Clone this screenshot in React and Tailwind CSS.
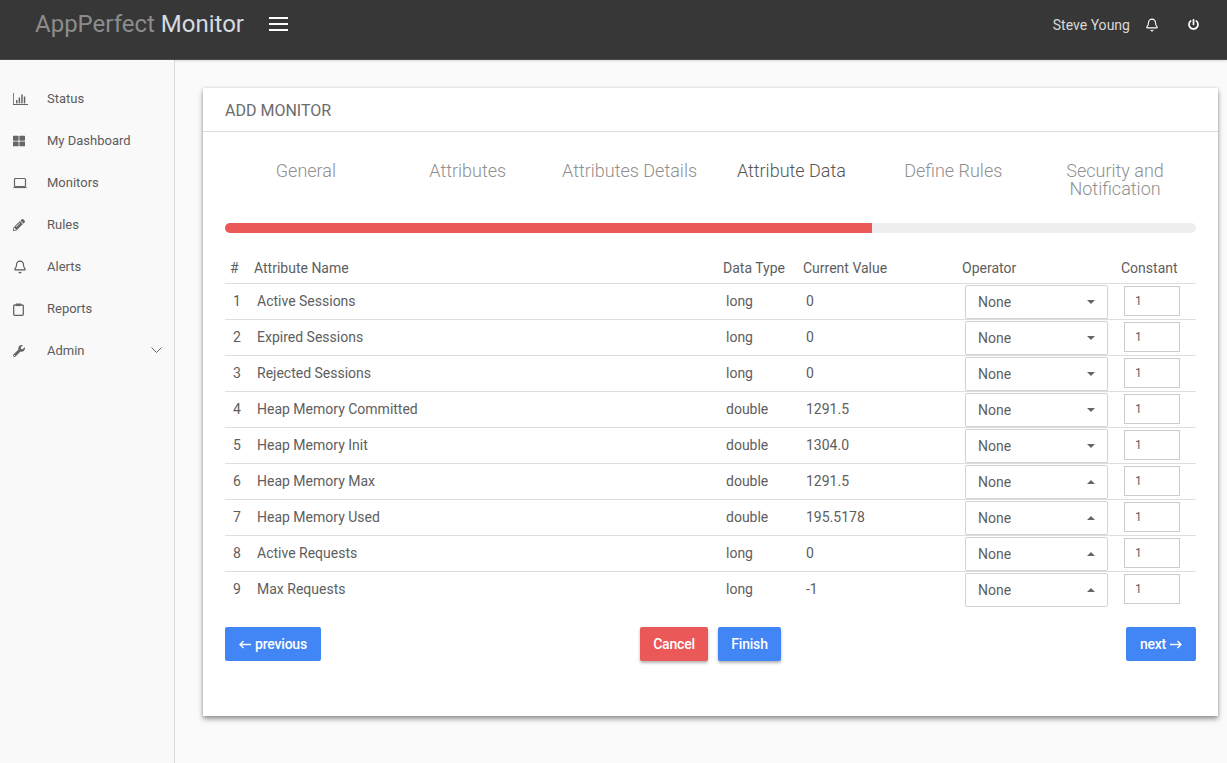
import React from "react";
import { FaThLarge, FaPencilAlt, FaWrench, FaPowerOff } from "react-icons/fa";
import { Bell } from "lucide-react";

const BarChart = () => (
  <svg width="15" height="12" viewBox="0 0 15 12" fill="#666">
    <path d="M0 0h.8v11H15v1H0z" />
    <rect x="3" y="7" width="1.5" height="3.4" />
    <rect x="5.6" y="4.5" width="1.5" height="5.9" />
    <rect x="8.2" y="1.5" width="1.5" height="8.9" />
    <rect x="10.8" y="3.5" width="1.5" height="6.9" />
  </svg>
);
const Laptop = () => (
  <svg width="14" height="12" viewBox="0 0 14 12" fill="none" stroke="#666">
    <rect x="1.5" y="1.5" width="11" height="8" rx="1" strokeWidth="1.2" />
    <path d="M0.5 10.5h13" strokeWidth="1.2" />
  </svg>
);
const Clip = () => (
  <svg width="11" height="13" viewBox="0 0 11 13" fill="none" stroke="#666">
    <rect x="0.7" y="2" width="9.6" height="10.3" rx="1" strokeWidth="1.3" />
    <rect x="3" y="0.5" width="5" height="2.6" fill="#666" stroke="none" />
  </svg>
);
const Arrow = ({ left }) => (
  <svg width="12" height="9" viewBox="0 0 12 9" fill="none" stroke="#fff" strokeWidth="1.4" className="inline-block shrink-0">
    <path d={left ? "M12 4.5H1M4.5 1L1 4.5L4.5 8" : "M0 4.5H11M7.5 1L11 4.5L7.5 8"} />
  </svg>
);

const nav = [
  ["Status", <BarChart />],
  ["My Dashboard", <FaThLarge size={12} color="#666" />],
  ["Monitors", <Laptop />],
  ["Rules", <FaPencilAlt size={12} color="#666" />],
  ["Alerts", <Bell size={14} color="#555" strokeWidth={1.9} />],
  ["Reports", <Clip />],
  ["Admin", <FaWrench size={12} color="#666" />],
];

const tabs = ["General", "Attributes", "Attributes Details", "Attribute Data", "Define Rules", "Security and Notification"];

const rows = [
  ["Active Sessions", "long", "0", false],
  ["Expired Sessions", "long", "0", false],
  ["Rejected Sessions", "long", "0", false],
  ["Heap Memory Committed", "double", "1291.5", false],
  ["Heap Memory Init", "double", "1304.0", false],
  ["Heap Memory Max", "double", "1291.5", true],
  ["Heap Memory Used", "double", "195.5178", true],
  ["Active Requests", "long", "0", true],
  ["Max Requests", "long", "-1", true],
];

const Caret = ({ up }) => (
  <svg width="8" height="4" viewBox="0 0 8 4" fill="#666">
    <path d={up ? "M0 4L4 0L8 4z" : "M0 0L8 0L4 4z"} />
  </svg>
);

export default function App() {
  return (
    <div className="w-[1227px] h-[763px] overflow-hidden flex flex-col bg-[#fafafa] font-['Roboto',sans-serif] text-[14px] text-[#5e5e5e]">
      <header className="h-[60px] shrink-0 bg-[#373737] border-b border-[#4a4a4a] flex items-center pl-[35px] pr-[28px] pb-[12px] shadow-[0_1px_2px_rgba(0,0,0,0.15)]">
        <div className="text-[24px] leading-none text-[#8c8c8c]">
          AppPerfect <span className="text-[#d6dbe0]">Monitor</span>
        </div>
        <div className="ml-[25px] w-[19px] flex flex-col gap-[4px]">
          <span className="h-[2px] bg-white" />
          <span className="h-[2px] bg-white" />
          <span className="h-[2px] bg-white" />
        </div>
        <div className="ml-auto text-[14px] text-[#d8d8d8] pt-[4px] tracking-[0.02px]">Steve Young</div>
        <Bell size={14} color="#ffffff" strokeWidth={1.9} className="ml-[15px] mt-[2px]" />
        <FaPowerOff size={11} color="#ffffff" className="ml-[29px] mt-[2px]" />
      </header>
      <div className="flex flex-1 min-h-0">
        <aside className="w-[175px] shrink-0 border-r border-[#d9d9d9] bg-[#f9f9f9] pt-[18px]">
          {nav.map(([label, icon]) => (
            <div key={label} className="h-[42px] flex items-center relative pl-[13px]">
              <span className="w-[34px] flex items-center">{icon}</span>
              <span className="text-[13px] text-[#5c5c5c]">{label}</span>
              {label === "Admin" && (
                <svg className="ml-auto mr-[12px] mb-[1px]" width="11" height="7" viewBox="0 0 11 7" fill="none" stroke="#666" strokeWidth="1">
                  <path d="M0.5 0.5L5.5 5.5L10.5 0.5" />
                </svg>
              )}
            </div>
          ))}
        </aside>
        <main className="flex-1 pt-[28px] pl-[28px] pr-[9px]">
          <section className="h-[628px] bg-white shadow-[0_3px_5px_rgba(0,0,0,0.4),0_0_3px_rgba(0,0,0,0.12)]">
            <div className="h-[44px] border-b border-[#dedede] flex items-center pl-[22px] pt-[2px] text-[16px] text-[#6b6b6b]">ADD MONITOR</div>
            <div className="px-[22px]">
              <div className="grid grid-cols-6 pt-[30px] h-[91px]">
                {tabs.map((t) => (
                  <div key={t} className={`text-center text-[18px] leading-[18px] font-light px-[10px] ${t === "Attribute Data" ? "text-[#555555]" : "text-[#8f8f8f]"}`}>
                    {t === "Security and Notification" ? (
                      <>Security and<br />Notification</>
                    ) : (
                      t
                    )}
                  </div>
                ))}
              </div>
              <div className="h-[10px] rounded-[5px] bg-[#eeeeee] overflow-hidden">
                <div className="h-full w-[647px] bg-[#ea5858]" />
              </div>
              <table className="mt-[19px] w-[971px] table-fixed border-collapse">
                <colgroup>
                  <col className="w-[24px]" />
                  <col className="w-[469px]" />
                  <col className="w-[80px]" />
                  <col className="w-[159px]" />
                  <col className="w-[159px]" />
                  <col className="w-[80px]" />
                </colgroup>
                <thead>
                  <tr className="h-[31px] border-b border-[#dddddd]">
                    {["#", "Attribute Name", "Data Type", "Current Value", "Operator", "Constant"].map((h) => (
                      <th key={h} className="font-normal text-left pl-[5px] pt-[3px] whitespace-nowrap">{h}</th>
                    ))}
                  </tr>
                </thead>
                <tbody>
                  {rows.map(([name, type, val, up], i) => (
                    <tr key={name} className={`h-[36px] ${i < 8 ? "border-b border-[#dddddd]" : ""}`}>
                      <td className="pl-[8px]">{i + 1}</td>
                      <td className="pl-[8px]">{name}</td>
                      <td className="pl-[8px]">{type}</td>
                      <td className="pl-[8px]">{val}</td>
                      <td className="pl-[8px] p-0">
                        <div className={`w-[143px] h-[34px] mt-[1px] border border-[#d4d4d4] rounded-[2px] flex items-center pl-[12px] pr-[12px] justify-between ${up ? "" : "shadow-[0_1px_1px_rgba(0,0,0,0.15)]"}`}>
                          <span className="pt-[2px]">None</span>
                          <Caret up={up} />
                        </div>
                      </td>
                      <td className="pl-[8px] p-0">
                        <div className="w-[56px] h-[30px] border border-[#cccccc] flex items-center pl-[10px] text-[12px]">1</div>
                      </td>
                    </tr>
                  ))}
                </tbody>
              </table>
              <div className="mt-[20px] flex items-start relative h-[34px]">
                <button className="h-[34px] w-[96px] rounded-[2px] bg-[#4285f4] text-white font-medium tracking-[-0.2px] text-[14px] flex items-center justify-center gap-[4px]"><Arrow left />previous</button>
                <div className="ml-[319px] flex gap-[10px]">
                  <button className="h-[34px] w-[68px] rounded-[2px] bg-[#ea5858] text-white font-medium tracking-[-0.2px] text-[14px] shadow-[0_2px_3px_rgba(0,0,0,0.3)]">Cancel</button>
                  <button className="h-[34px] w-[63px] rounded-[2px] bg-[#4285f4] text-white font-medium tracking-[-0.2px] text-[14px] shadow-[0_2px_3px_rgba(0,0,0,0.3)]">Finish</button>
                </div>
                <button className="ml-auto h-[34px] w-[70px] rounded-[2px] bg-[#4285f4] text-white font-medium tracking-[-0.2px] text-[14px] flex items-center justify-center gap-[4px]">next<Arrow /></button>
              </div>
            </div>
          </section>
        </main>
      </div>
    </div>
  );
}
